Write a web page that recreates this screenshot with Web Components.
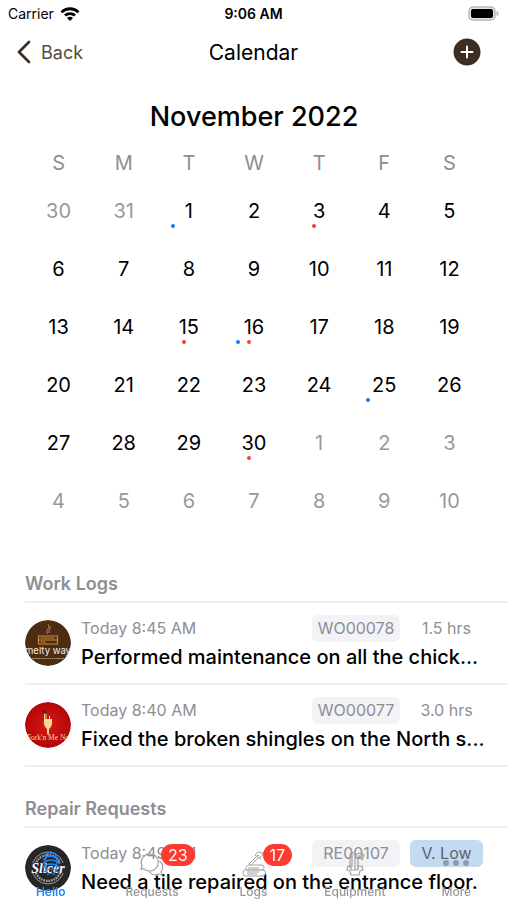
<!DOCTYPE html>
<html lang="en">
<head>
<meta charset="utf-8">
<meta name="viewport" content="width=device-width, initial-scale=1">
<title>Calendar</title>
<style>
body {
  margin: 0;
  background: #fff;
  color: #000;
  font-family: Inter, "Liberation Sans", sans-serif;
  --color-grey: #8e8e93;
  --color-brown: #3d2e24;
  --color-blue: #0f7bf0;
  --color-red: #ff3b30;
  --color-line: #eeeeef;
}
</style>
</head>
<body>
<calendar-app></calendar-app>

<script>
class StatusBar extends HTMLElement {
  constructor() {
    super();
    this.attachShadow({ mode: 'open' }).innerHTML = `
<style>
:host {
  display: grid;
  grid-template-columns: 1fr auto 1fr;
  align-items: center;
  height: 27px;
  padding: 0 8px;
  font-size: 14px;
}
.carrier {
  display: flex;
  align-items: center;
  gap: 6px;
}
.time {
  font-weight: 600;
}
.battery {
  justify-self: end;
}
svg {
  display: block;
}
</style>
<span class="carrier">Carrier
  <svg width="20" height="14" viewBox="0 0 20 14" fill="none" stroke="#000" stroke-width="2.8">
    <path d="M1.500 5.200a12.200 12.200 0 0 1 17 0"/>
    <path d="M5 8.600a7.200 7.200 0 0 1 10 0"/>
    <path d="M10 14 7 11a4.200 4.200 0 0 1 6 0z" fill="#000" stroke="none"/>
  </svg>
</span>
<span class="time">9:06 AM</span>
<svg class="battery" width="31" height="15" viewBox="0 0 31 15">
  <rect x="1" y="1" width="26" height="13" rx="4" fill="#e4e4e4" stroke="#b8b8b8" stroke-width="1.4"/>
  <rect x="3" y="3" width="22" height="9" rx="2" fill="#000"/>
  <path d="M28.600 5v5q2-.8 2-2.500t-2-2.500z" fill="#b4b4b4"/>
</svg>`;
  }
}
customElements.define('status-bar', StatusBar);

class NavHeader extends HTMLElement {
  constructor() {
    super();
    this.attachShadow({ mode: 'open' }).innerHTML = `
<style>
:host {
  display: grid;
  grid-template-columns: 1fr auto 1fr;
  align-items: center;
  height: 50px;
  padding: 0 16px;
}
button {
  display: flex;
  align-items: center;
  gap: 10px;
  padding: 0;
  border: 0;
  background: none;
  font: inherit;
  font-size: 18px;
  color: #564b41;
  cursor: pointer;
}
h1 {
  margin: 0;
  font-size: 21px;
  font-weight: 400;
}
.add {
  justify-self: end;
  margin-right: 10px;
}
svg {
  display: block;
}
</style>
<button class="back">
  <svg width="15" height="24" viewBox="0 0 15 24" fill="none" stroke="#3d2e24" stroke-width="2.800" stroke-linecap="round" stroke-linejoin="round">
    <path d="M13 2 3 12l10 10"/>
  </svg>
  <span>Back</span>
</button>
<h1><slot></slot></h1>
<button class="add" aria-label="Add">
  <svg width="28" height="28" viewBox="0 0 28 28">
    <circle cx="14" cy="14" r="13.500" fill="#3d2e24"/>
    <path d="M14 8.500v11M8.500 14h11" stroke="#fff" stroke-width="2" stroke-linecap="round"/>
  </svg>
</button>`;
  }
}
customElements.define('nav-header', NavHeader);

class MonthCalendar extends HTMLElement {
  constructor() {
    super();
    // w = work log, r = repair request
    const marks = { 1: 'w', 3: 'r', 15: 'r', 16: 'wr', 25: 'w', 30: 'r' };
    let rows = '';
    for (let week = 0; week < 6; week++) {
      rows += '<tr>';
      for (let day = 0; day < 7; day++) {
        const date = new Date(2022, 9, 30 + week * 7 + day);
        const current = date.getMonth() === 10;
        const mark = (current && marks[date.getDate()]) || '';
        rows += `<td class="${current ? '' : 'outside'}">${date.getDate()}
          <div class="marks">
            <i class="${mark.includes('w') ? 'work' : ''}"></i>
            <i class="${mark.includes('r') ? 'repair' : ''}"></i>
          </div></td>`;
      }
      rows += '</tr>';
    }
    this.attachShadow({ mode: 'open' }).innerHTML = `
<style>
:host {
  display: block;
  padding: 20px 25px 4px 26px;
}
table {
  width: 100%;
  table-layout: fixed;
  border-collapse: collapse;
  text-align: center;
  font-size: 20px;
  line-height: 26px;
}
caption {
  padding-bottom: 13px;
  font-size: 27px;
  line-height: 40px;
  font-weight: 500;
}
th {
  height: 34px;
  padding: 0 0 6px;
  font-weight: 400;
  vertical-align: top;
  color: var(--color-grey);
}
td {
  height: 58px;
  padding: 8px 0 0;
  box-sizing: border-box;
  vertical-align: top;
}
.outside {
  color: #98989c;
}
.marks {
  display: flex;
  gap: 7px;
  width: 36px;
  height: 4px;
  margin: 0 auto;
}
i {
  width: 4px;
  height: 4px;
  border-radius: 50%;
}
.work {
  background: var(--color-blue);
}
.repair {
  background: var(--color-red);
}
</style>
<table>
  <caption>November 2022</caption>
  <thead><tr><th>S</th><th>M</th><th>T</th><th>W</th><th>T</th><th>F</th><th>S</th></tr></thead>
  <tbody>${rows}</tbody>
</table>`;
  }
}
customElements.define('month-calendar', MonthCalendar);

class LogSection extends HTMLElement {
  constructor() {
    super();
    this.attachShadow({ mode: 'open' }).innerHTML = `
<style>
:host {
  display: block;
  padding: 30px 0 0 25px;
}
h2 {
  margin: 0;
  padding-bottom: 5px;
  border-bottom: 2px solid var(--color-line);
  font-size: 18px;
  line-height: 24px;
  font-weight: 600;
  color: var(--color-grey);
}
</style>
<h2></h2>
<slot></slot>`;
  }

  connectedCallback() {
    this.shadowRoot.querySelector('h2').textContent = this.getAttribute('heading');
  }
}
customElements.define('log-section', LogSection);

class LogItem extends HTMLElement {
  constructor() {
    super();
    this.attachShadow({ mode: 'open' }).innerHTML = `
<style>
:host {
  display: flex;
  align-items: center;
  gap: 10px;
  height: 80px;
  padding-right: 24px;
  border-bottom: 2px solid var(--color-line);
}
::slotted(svg) {
  flex: none;
  width: 46px;
  height: 46px;
  border-radius: 50%;
}
.info {
  flex: 1;
  min-width: 0;
}
.meta {
  display: flex;
  align-items: center;
  height: 28px;
  font-size: 16px;
  color: var(--color-grey);
}
.time {
  flex: 1;
}
.code {
  width: 88px;
  border-radius: 6px;
  background: #f2f2f7;
  text-align: center;
  line-height: 27px;
}
.note {
  width: 73px;
  margin-left: 10px;
  border-radius: 6px;
  text-align: center;
  line-height: 27px;
}
.priority .note {
  background: #c3dbf1;
  color: #58636e;
}
p {
  margin: 0;
  font-size: 20px;
  line-height: 30px;
  font-weight: 500;
  white-space: nowrap;
}
</style>
<slot name="logo"></slot>
<div class="info">
  <div class="meta"><span class="time"></span><span class="code"></span><span class="note"></span></div>
  <p><slot></slot></p>
</div>`;
  }

  connectedCallback() {
    for (const name of ['time', 'code', 'note']) {
      this.shadowRoot.querySelector('.' + name).textContent = this.getAttribute(name);
    }
    this.shadowRoot.querySelector('.meta').classList.toggle('priority', this.hasAttribute('priority'));
  }
}
customElements.define('log-item', LogItem);

class TabItem extends HTMLElement {
  constructor() {
    super();
    this.attachShadow({ mode: 'open' }).innerHTML = `
<style>
:host {
  flex: 1;
  display: block;
  color: #98989c;
}
:host([active]) {
  color: #2386f5;
}
a {
  display: flex;
  flex-direction: column;
  align-items: center;
  gap: 4px;
  color: inherit;
  text-decoration: none;
  font-size: 12px;
  line-height: 16px;
  font-weight: 500;
}
:host([active]) a {
  font-weight: 600;
}
.icon {
  position: relative;
  width: 32px;
  height: 32px;
}
::slotted(svg) {
  display: block;
  width: 32px;
  height: 32px;
}
.badge {
  position: absolute;
  left: 25px;
  top: -4px;
  padding: 0 7px;
  border-radius: 11px;
  background: var(--color-red);
  color: #fff;
  font-size: 16px;
  line-height: 22px;
  font-weight: 400;
}
.badge:empty {
  display: none;
}
</style>
<a href="#"><span class="icon"><slot></slot><span class="badge"></span></span><span class="label"></span></a>`;
  }

  connectedCallback() {
    this.shadowRoot.querySelector('.label').textContent = this.getAttribute('label');
    this.shadowRoot.querySelector('.badge').textContent = this.getAttribute('badge') || '';
  }
}
customElements.define('tab-item', TabItem);

class CalendarApp extends HTMLElement {
  constructor() {
    super();
    this.attachShadow({ mode: 'open' }).innerHTML = `
<style>
:host {
  display: block;
  height: 100vh;
  overflow: hidden;
}
/* the tab bar has no background and floats over the list */
nav {
  position: fixed;
  left: 0;
  right: 0;
  bottom: 0;
  display: flex;
}
</style>
<status-bar></status-bar>
<nav-header>Calendar</nav-header>
<month-calendar></month-calendar>
<log-section heading="Work Logs">
  <log-item time="Today 8:45 AM" code="WO00078" note="1.5 hrs">
    <svg slot="logo" viewBox="0 0 46 46">
      <circle cx="23" cy="23" r="23" fill="#4a2d12"/>
      <path d="M23 14c-4-3 3-5 0-10M24.500 13c-2-3 2-4 .5-7" fill="none" stroke="#c99f73" stroke-width=".8"/>
      <path d="M13.500 16h19v4h-19zM13.500 20h19v4h-19zM15.500 18h14M15.500 22h5" fill="none" stroke="#d28a3c" stroke-width="1.200"/>
      <text x="23" y="34" text-anchor="middle" font-size="9.500" fill="#f5eee6">melty way</text>
      <path d="M7 38.500h32" stroke="#b39b84" stroke-width="1.200" stroke-dasharray="1.500 .7"/>
    </svg>
    Performed maintenance on all the chick...
  </log-item>
  <log-item time="Today 8:40 AM" code="WO00077" note="3.0 hrs">
    <svg slot="logo" viewBox="0 0 46 46">
      <defs><radialGradient id="wine"><stop offset="0" stop-color="#d51a14"/><stop offset="1" stop-color="#b30609"/></radialGradient></defs>
      <circle cx="23" cy="23" r="23" fill="url(#wine)"/>
      <path d="M19 17h8q.8 8-2.800 9.500l-.4 6h-1.600l-.4-6Q18.200 25 19 17z" fill="#f3d98f"/>
      <path d="M19.500 18V9.500M21 18v-6M24.500 18v-4" stroke="#f3d98f" stroke-width="1"/>
      <path d="M19.500 8.500v3" stroke="#3a0d08" stroke-width="1.500"/>
      <text x="23" y="38" text-anchor="middle" font-family="Liberation Serif, serif" font-size="7.500" fill="#f6d9a8">Fork'n Me No</text>
    </svg>
    Fixed the broken shingles on the North s...
  </log-item>
</log-section>
<log-section heading="Repair Requests">
  <log-item time="Today 8:49 AM" code="RE00107" note="V. Low" priority>
    <svg slot="logo" viewBox="0 0 46 46">
      <circle cx="23" cy="23" r="23" fill="#262627"/>
      <circle cx="23" cy="23" r="16" fill="none" stroke="#b9b9b9" stroke-width=".8"/>
      <circle cx="23" cy="23" r="13" fill="none" stroke="#a5a5a5" stroke-width="2.400" stroke-dasharray="1.600 1"/>
      <path d="M6 18h34v10H6z" fill="#262627"/>
      <text x="23" y="28" text-anchor="middle" font-family="Liberation Serif, serif" font-style="italic" font-weight="700" font-size="14" fill="#fff">Slicer</text>
    </svg>
    Need a tile repaired on the entrance floor.
  </log-item>
</log-section>
<nav>
  <tab-item label="Hello" active>
    <svg viewBox="0 0 32 32" fill="none" stroke="#2386f5" stroke-width="1.200">
      <path d="M9 8q7-7 14 0M8 12q8-8 16 0M7 16q9-8 18 0M7 20q9-8 18 0M9 24q7-6 14 0M12 27q4-3 8 0"/>
      <path d="M16 3v4M12 6q-4 9 0 19M20 6q4 9 0 19"/>
    </svg>
  </tab-item>
  <tab-item label="Requests" badge="23">
    <svg viewBox="0 0 32 32" fill="none" stroke="#a2a2a5" stroke-width="1.200" stroke-linejoin="round">
      <path d="M7.500 20.500 5 21.500l1-3.500a8.500 8.500 0 1 1 5 4.500q-2-.5-3.500-2z"/>
      <path d="M23.500 13a7 7 0 0 1 1.500 10.500l1 3.500-3.500-1a7.500 7.500 0 0 1-9.500-2.500"/>
    </svg>
  </tab-item>
  <tab-item label="Logs" badge="17">
    <svg viewBox="0 0 32 32" fill="#fff" fill-opacity=".5" stroke="#a2a2a5" stroke-width="1" stroke-linejoin="round">
      <path d="m11 16 9-9 1.500 1.500-9 9zM17 7l3-3 5 1-3 6z"/>
      <path d="M8 19q1-2 3-2h13q2 0 2 2.500T24 22H10q-3 0-2-3z"/>
      <path d="M7 22h18q2.500 0 2.500 3T25 28H7.500q-2.500 0-2.500-3t2-3z"/>
      <path d="M10 20h11M9 24h12M9 26h10" fill="none"/>
    </svg>
  </tab-item>
  <tab-item label="Equipment">
    <svg viewBox="0 0 32 32" fill="none" stroke="#a2a2a5" stroke-width="1.200" stroke-linejoin="round">
      <path d="M11 20V6q2-3 5 0v16M13 7v12M16 8q4-5 9-1l-2 5-2-4q-2-1-2 3v10"/>
      <path d="M12 18H9l-1 4 3 1 1 4h8l1-4 3-1-1-4h-4v4h-7z"/>
    </svg>
  </tab-item>
  <tab-item label="More">
    <svg viewBox="0 0 32 32" fill="#929ba3">
      <circle cx="6" cy="15" r="3"/><circle cx="16" cy="15" r="3"/><circle cx="26" cy="15" r="3"/>
    </svg>
  </tab-item>
</nav>`;
  }
}
customElements.define('calendar-app', CalendarApp);
</script>
</body>
</html>
